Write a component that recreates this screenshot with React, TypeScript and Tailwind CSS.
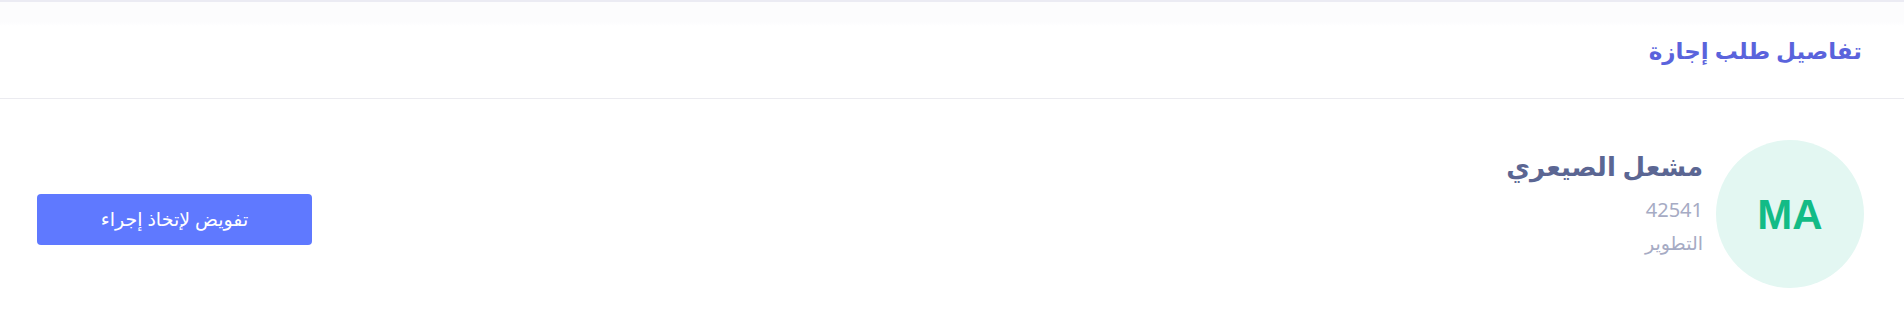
export default function App() {
  return (
    <div
      dir="rtl"
      className="min-h-[312px] w-full bg-white"
      style={{ fontFamily: '"Noto Sans", "DejaVu Sans", sans-serif' }}
    >
      <section className="border-t-2 border-[#ebebf3]">
        <header className="flex h-[97px] items-center border-b border-[#ebebf0] bg-[linear-gradient(to_bottom,#fcfcfd_0px,#fcfcfd_20px,#ffffff_24px)] px-[42px]">
          <h1 className="text-[23px] font-semibold text-[#5a63dc]">تفاصيل طلب إجازة</h1>
        </header>

        <div className="flex items-center justify-between px-[40px] pt-[41px] pb-[23px]">
          <div className="flex items-center gap-[13px]">
            <div className="flex h-[148px] w-[148px] items-center justify-center rounded-full bg-[#e3f7f2]">
              <span
                className="text-[42px] font-bold text-[#13bb86]"
                style={{ fontFamily: '"Liberation Sans", Arial, sans-serif' }}
              >
                MA
              </span>
            </div>
            <div className="mb-[20px] flex flex-col">
              <p className="-mt-[4px] text-[26px] font-bold leading-[36px] text-[#5b6693]">مشعل الصيعري</p>
              <p className="mt-[11px] text-[20px] leading-[30px] text-[#a6abc4]">42541</p>
              <p className="mt-[4px] text-[19px] leading-[28px] text-[#a6abc4]">التطوير</p>
            </div>
          </div>

          <button
            type="button"
            className="ml-[-3px] mt-[11px] h-[51px] w-[275px] rounded-[4px] bg-[#5f79ff] text-[19px] text-white"
          >
            تفويض لإتخاذ إجراء
          </button>
        </div>
      </section>
    </div>
  );
}
